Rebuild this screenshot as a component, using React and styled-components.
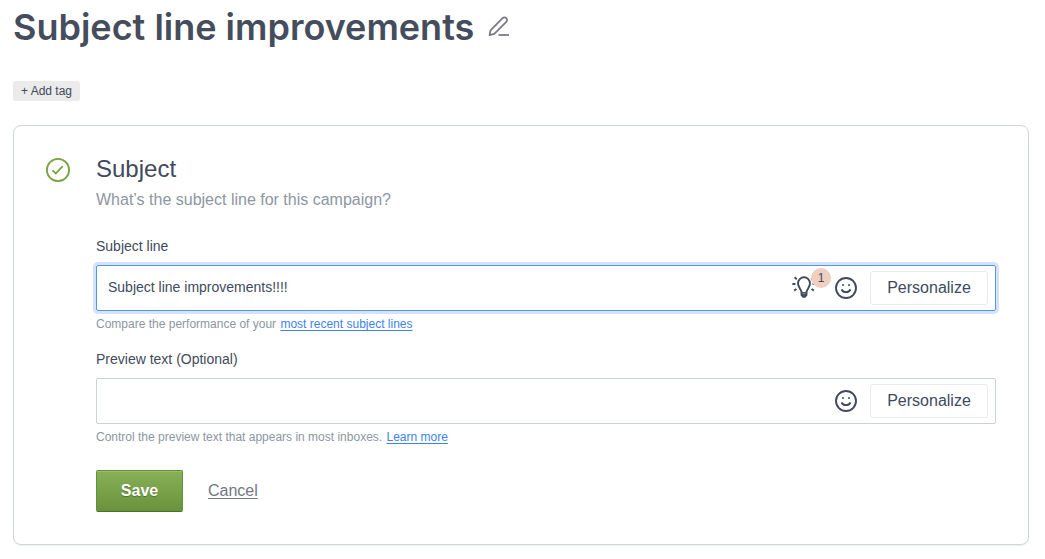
import React, { useState } from 'react';
import styled, { createGlobalStyle } from 'styled-components';

const GlobalStyle = createGlobalStyle`
    *, *::before, *::after {
        box-sizing: border-box;
    }

    body {
        margin: 0;
        background: white;
        color: #414a5c;
        font-family: "Liberation Sans", Arial, sans-serif;
        font-size: 14px;
        line-height: 20px;
    }

    button, input {
        font: inherit;
        color: inherit;
    }

    button {
        cursor: pointer;
    }
`;

const Page = styled.main`
    padding: 3px 16px 12px 13px;
`;

const TitleRow = styled.header`
    display: flex;
    align-items: center;
    gap: 14px;
`;

const Title = styled.h1`
    margin: 0;
    font-family: Inter, "Liberation Sans", sans-serif;
    font-size: 36px;
    font-weight: 600;
    line-height: 48px;
    color: #454d5d;
`;

const IconButton = styled.button`
    display: flex;
    padding: 0;
    border: 0;
    background: none;
    color: ${({ $muted }) => ($muted ? '#7c7987' : '#414a5c')};
`;

const TagButton = styled.button`
    display: block;
    height: 20px;
    margin: 30px 0 24px;
    padding: 0 8px;
    border: 0;
    border-radius: 3px;
    background: #ebebeb;
    font-size: 12px;
    line-height: 20px;
`;

const Card = styled.section`
    display: flex;
    gap: 26px;
    padding: 28px 32px 32px;
    border: 1px solid #d0d4db;
    border-radius: 8px;
    box-shadow: 0 1px 1px #eef0f3;
`;

const CheckSlot = styled.div`
    flex: none;
    height: 24px;
    padding-top: 4px;
`;

const CardBody = styled.form`
    flex: 1;
    min-width: 0;
`;

const CardTitle = styled.h2`
    margin: 0 0 4px;
    font-size: 24px;
    font-weight: 400;
    line-height: 30px;
`;

const CardHint = styled.p`
    margin: 0 0 24px;
    font-size: 16px;
    line-height: 24px;
    color: #8d96a3;
`;

const FieldGroup = styled.div`
    margin-bottom: 17px;
`;

const Label = styled.label`
    display: block;
    margin-bottom: 9px;
`;

const InputBox = styled.div`
    display: flex;
    align-items: center;
    height: 46px;
    padding: 0 7px 0 11px;
    border: 1px solid ${({ $active }) => ($active ? '#5596ed' : '#ccd0d7')};
    border-radius: 2px;
    box-shadow: ${({ $active }) => ($active ? '0 0 0 3px #d3e3fa' : 'none')};
`;

const TextInput = styled.input`
    flex: 1;
    min-width: 0;
    height: 100%;
    padding: 0 0 2px;
    border: 0;
    outline: none;
    background: none;
`;

const Tools = styled.div`
    display: flex;
    align-items: center;
    gap: 13px;
`;

const HintButton = styled(IconButton)`
    position: relative;
    margin-right: 6px;
`;

const Badge = styled.span`
    position: absolute;
    top: -8px;
    left: 19px;
    width: 20px;
    height: 20px;
    border-radius: 50%;
    background: #efcfc0;
    font-size: 12px;
    line-height: 20px;
    text-align: center;
`;

const PersonalizeButton = styled.button`
    width: 118px;
    height: 34px;
    padding: 0;
    border: 1px solid #e8eaed;
    border-radius: 3px;
    background: white;
    font-size: 16px;
`;

const HelpText = styled.p`
    margin: 5px 0 0;
    font-size: 12px;
    line-height: 16px;
    color: #8d96a3;
`;

const HelpLink = styled.a`
    margin-left: 1px;
    color: #3d83ef;
    text-underline-offset: 2px;
`;

const Actions = styled.div`
    display: flex;
    align-items: center;
    gap: 25px;
    margin-top: 25px;
    font-size: 16px;
`;

const SaveButton = styled.button`
    width: 87px;
    height: 42px;
    padding: 0;
    border: 1px solid #62913a;
    border-bottom-color: #4a7228;
    border-radius: 2px;
    background: linear-gradient(#88b058, #69923c);
    box-shadow: inset 0 1px 0 #96c163;
    color: white;
    font-weight: 700;
    text-shadow: 0 1px 1px rgba(0, 0, 0, 0.3);
`;

const CancelLink = styled.a`
    color: #737884;
    text-underline-offset: 2px;
`;

const PencilIcon = () => (
    <svg width="22" height="22" viewBox="0 0 22 22" fill="none" stroke="currentColor" strokeWidth="1.8">
        <path d="M1.6 19.2 2.5 14.3 14.6 2.2a2.6 2.6 0 0 1 3.7 0 2.6 2.6 0 0 1 0 3.7L6.3 17.9Z" strokeLinejoin="round" />
        <path d="M10.5 19H21" />
    </svg>
);

const CheckIcon = () => (
    <svg width="24" height="24" viewBox="0 0 24 24" fill="none" stroke="#76a23f" strokeWidth="1.8">
        <circle cx="12" cy="12" r="11.1" />
        <path d="m6.5 12.3 3.3 3.2 6.9-7.3" />
    </svg>
);

const BulbIcon = () => (
    <svg width="24" height="24" viewBox="0 0 24 24" fill="none" stroke="currentColor" strokeWidth="1.9">
        <path d="M9.6 16.6C9.6 13.4 6 11.6 6 7.3a6 6 0 0 1 12 0c0 4.3-3.6 6.1-3.6 9.3" />
        <path d="M8.7 16.9h6.6" strokeWidth="1.6" />
        <path d="M9.6 16.8v2.4l1.5 1.7h1.8l1.5-1.7v-2.4" />
        <path d="M10 19h4" />
        <path d="M.4 8h3M20.6 8h3M2.6 1.3l2.2 1.9M21.4 1.3l-2.2 1.9M2.2 14.8l2.2-1.9M21.8 14.8l-2.2-1.9" />
    </svg>
);

const SmileIcon = () => (
    <svg width="22" height="22" viewBox="0 0 22 22" fill="none" stroke="currentColor" strokeWidth="1.9">
        <circle cx="11" cy="11" r="10" />
        <path d="M6.6 12.4c.6 1.8 2.2 2.7 4.4 2.7s3.8-.9 4.4-2.7" />
        <circle cx="8" cy="8.1" r="1" fill="currentColor" stroke="none" />
        <circle cx="14" cy="8.1" r="1" fill="currentColor" stroke="none" />
    </svg>
);

const Field = ({ id, label, value, onChange, active, suggestions, help, linkText }) => (
    <FieldGroup>
        <Label htmlFor={id}>{label}</Label>
        <InputBox $active={active}>
            <TextInput id={id} type="text" value={value} onChange={e => onChange(e.target.value)} />
            <Tools>
                {suggestions ?
                    <HintButton type="button" aria-label="Suggestions">
                        <BulbIcon />
                        <Badge>{suggestions}</Badge>
                    </HintButton>
                : null}
                <IconButton type="button" aria-label="Insert emoji"><SmileIcon /></IconButton>
                <PersonalizeButton type="button">Personalize</PersonalizeButton>
            </Tools>
        </InputBox>
        <HelpText>{help} <HelpLink href="#">{linkText}</HelpLink></HelpText>
    </FieldGroup>
);

export default function App() {
    const [subject, setSubject] = useState('Subject line improvements!!!!');
    const [preview, setPreview] = useState('');

    return (
        <Page>
            <GlobalStyle />
            <TitleRow>
                <Title>Subject line improvements</Title>
                <IconButton type="button" aria-label="Rename" $muted><PencilIcon /></IconButton>
            </TitleRow>
            <TagButton type="button">+ Add tag</TagButton>
            <Card>
                <CheckSlot><CheckIcon /></CheckSlot>
                <CardBody onSubmit={e => e.preventDefault()}>
                    <CardTitle>Subject</CardTitle>
                    <CardHint>What’s the subject line for this campaign?</CardHint>
                    <Field
                        id="subject"
                        label="Subject line"
                        value={subject}
                        onChange={setSubject}
                        active
                        suggestions={1}
                        help="Compare the performance of your"
                        linkText="most recent subject lines"
                    />
                    <Field
                        id="preview"
                        label="Preview text (Optional)"
                        value={preview}
                        onChange={setPreview}
                        help="Control the preview text that appears in most inboxes."
                        linkText="Learn more"
                    />
                    <Actions>
                        <SaveButton type="submit">Save</SaveButton>
                        <CancelLink href="#">Cancel</CancelLink>
                    </Actions>
                </CardBody>
            </Card>
        </Page>
    );
}
